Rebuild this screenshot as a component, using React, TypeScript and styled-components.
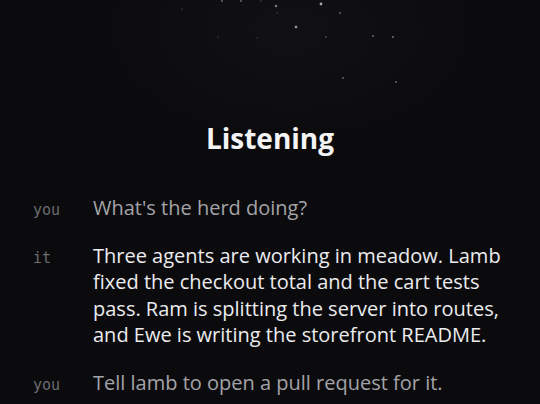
import styled, { createGlobalStyle } from "styled-components"

const GlobalStyle = createGlobalStyle`
  html, body {
    margin: 0;
    padding: 0;
    background: #0b0b0e;
  }
`

type Message = {
  from: "you" | "it"
  text: string
}

const messages: Message[] = [
  { from: "you", text: "What's the herd doing?" },
  {
    from: "it",
    text: "Three agents are working in meadow. Lamb fixed the checkout total and the cart tests pass. Ram is splitting the server into routes, and Ewe is writing the storefront README.",
  },
  { from: "you", text: "Tell lamb to open a pull request for it." },
]

// x, y, radius, opacity
const stars: [number, number, number, number][] = [
  [182, 9, 0.8, 0.25],
  [222, 1, 1, 0.45],
  [241, 1, 1, 0.45],
  [261, 1, 0.8, 0.3],
  [276, 6, 1.2, 0.55],
  [277, 13, 0.8, 0.25],
  [321, 4, 1.4, 0.75],
  [340, 13, 1, 0.4],
  [296, 27, 1.3, 0.7],
  [218, 37, 0.8, 0.2],
  [257, 38, 0.8, 0.22],
  [326, 37, 0.9, 0.3],
  [373, 36, 1, 0.45],
  [393, 37, 1, 0.5],
  [343, 78, 1, 0.4],
  [396, 82, 1, 0.45],
]

const Screen = styled.div`
  width: 540px;
  height: 404px;
  overflow: hidden;
  display: flex;
  flex-direction: column;
  background: radial-gradient(
    ellipse 200px 120px at 290px 30px,
    #111115 0%,
    #0b0b0e 100%
  );
`

const Sky = styled.svg`
  display: block;
  width: 540px;
  height: 100px;
  flex-shrink: 0;
`

const Title = styled.h1`
  margin: 22px 0 0;
  text-align: center;
  font-family: "Open Sans", Roboto, sans-serif;
  font-size: 28px;
  font-weight: 700;
  line-height: 32px;
  color: #f4f4f5;
`

const Conversation = styled.div`
  margin-top: 41px;
  display: flex;
  flex-direction: column;
  gap: 21px;
`

const Row = styled.div`
  display: flex;
  align-items: baseline;
  padding-left: 33px;
`

const Speaker = styled.span`
  width: 60px;
  flex-shrink: 0;
  font-family: "DejaVu Sans Mono", "Liberation Mono", monospace;
  font-size: 15px;
  color: #6c6c70;
`

const Text = styled.p<{ $mine: boolean }>`
  margin: 0;
  width: 425px;
  font-family: "Open Sans", Roboto, sans-serif;
  font-size: 20px;
  line-height: 26.5px;
  color: ${(p) => (p.$mine ? "#a3a3a8" : "#ececee")};
`

const App = () => {
  return (
    <>
      <GlobalStyle />
      <Screen>
        <Sky viewBox="0 0 540 100">
          {stars.map(([x, y, r, o], i) => (
            <circle key={i} cx={x} cy={y} r={r} fill="#d8d8e0" opacity={o} />
          ))}
        </Sky>
        <Title>Listening</Title>
        <Conversation>
          {messages.map((m, i) => (
            <Row key={i}>
              <Speaker>{m.from}</Speaker>
              <Text $mine={m.from === "you"}>{m.text}</Text>
            </Row>
          ))}
        </Conversation>
      </Screen>
    </>
  )
}

export default App
